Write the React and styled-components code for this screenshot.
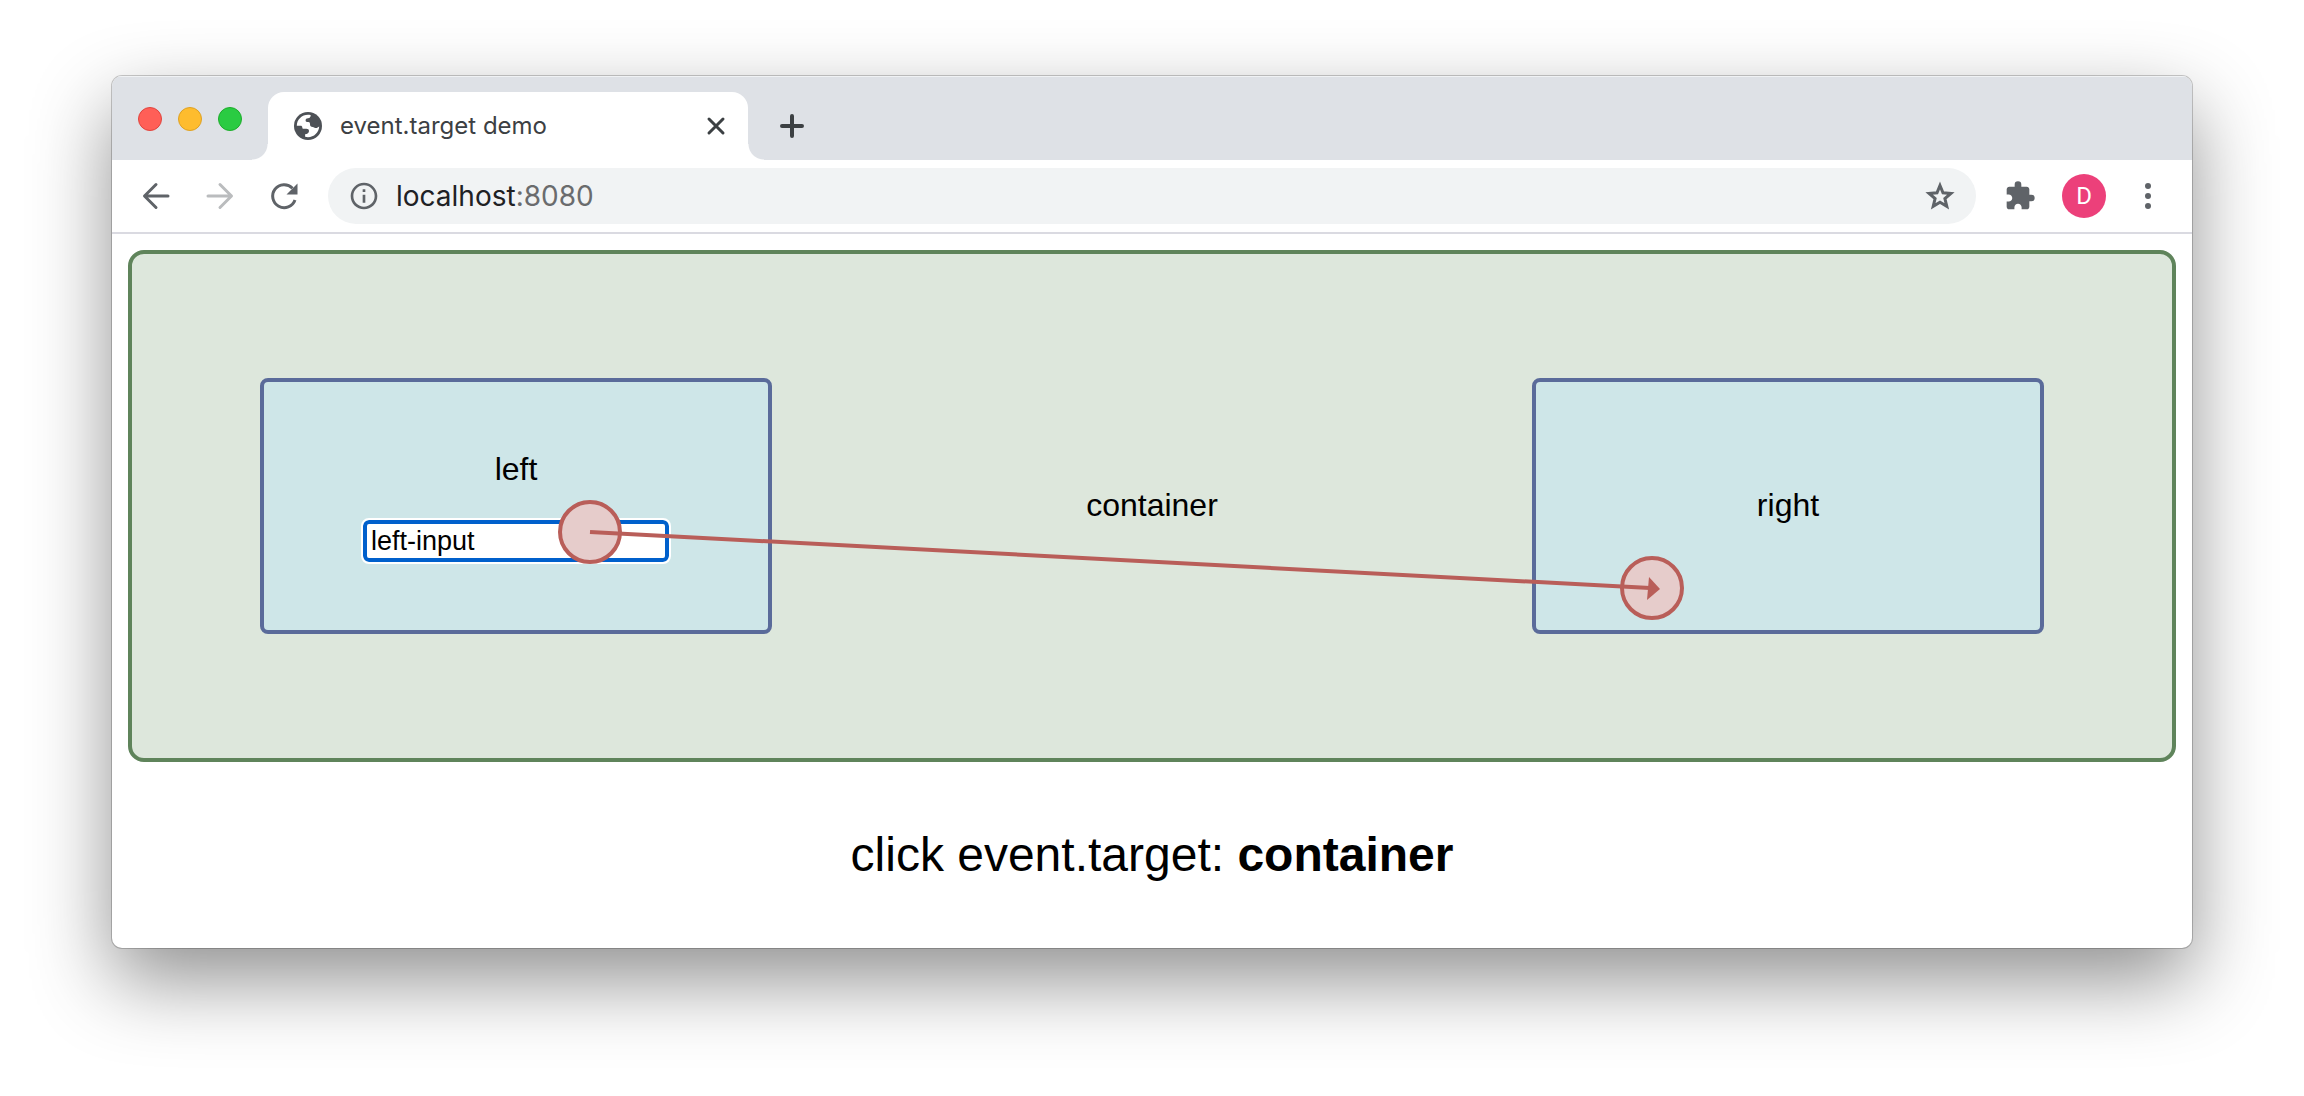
import React from 'react';
import styled, { createGlobalStyle } from 'styled-components';
import { MdExtension, MdOutlineInfo } from 'react-icons/md';

const GlobalStyle = createGlobalStyle`
  *, *::before, *::after { box-sizing: border-box; }
  body {
    margin: 0;
    background: #fff;
    color: #000;
    font-family: "Liberation Sans", Arial, sans-serif;
  }
  button, input { font: inherit; }
`;

const Desktop = styled.main`
  padding: 76px 112px 148px;
`;

const BrowserWindow = styled.section`
  border-radius: 10px;
  overflow: hidden;
  background: #fff;
  box-shadow:
    0 0 0 1px rgba(0, 0, 0, 0.2),
    0 32px 80px rgba(0, 0, 0, 0.44);
`;

const TabStrip = styled.header`
  display: flex;
  align-items: flex-end;
  height: 84px;
  background: #dee1e6;
  box-shadow: inset 0 2px 0 -1px #f0f2f4;
`;

const TrafficLights = styled.div`
  display: flex;
  align-self: center;
  gap: 16px;
  padding: 2px 26px 0;
`;

const Light = styled.button`
  width: 24px;
  height: 24px;
  padding: 0;
  border: 1px solid ${(p) => p.$edge};
  border-radius: 50%;
  background: ${(p) => p.$fill};
`;

const Tab = styled.div`
  position: relative;
  display: flex;
  align-items: center;
  gap: 18px;
  width: 480px;
  height: 68px;
  padding: 0 20px 0 26px;
  border-radius: 16px 16px 0 0;
  background: #fff;
  color: #3c4043;
  font: 24px/32px Inter, Roboto, sans-serif;

  &::before,
  &::after {
    content: "";
    position: absolute;
    bottom: 0;
    width: 16px;
    height: 16px;
  }
  &::before {
    right: 100%;
    background: radial-gradient(circle at 0 0, transparent 15px, #fff 16px);
  }
  &::after {
    left: 100%;
    background: radial-gradient(circle at 100% 0, transparent 15px, #fff 16px);
  }
`;

const TabTitle = styled.span`
  flex: 1;
  white-space: nowrap;
`;

const IconButton = styled.button`
  display: grid;
  place-items: center;
  flex: none;
  width: ${(p) => p.$size}px;
  height: ${(p) => p.$size}px;
  padding: 0;
  border: 0;
  background: none;
  color: ${(p) => p.$color || '#5f6368'};
  svg { display: block; }
`;

const NewTab = styled(IconButton)`
  align-self: flex-end;
  margin: 0 0 10px 20px;
`;

const Toolbar = styled.nav`
  display: flex;
  align-items: center;
  height: 74px;
  padding: 0 22px 0 20px;
  border-bottom: 2px solid #dadae1;
`;

const NavButtons = styled.div`
  display: flex;
  gap: 16px;
  margin-right: 20px;
`;

const Omnibox = styled.div`
  display: flex;
  flex: 1;
  align-items: center;
  gap: 16px;
  height: 56px;
  padding: 0 20px;
  border-radius: 28px;
  background: #f1f3f4;
  color: #5f6368;
`;

const Address = styled.span`
  flex: 1;
  color: #6a6b6d;
  font: 28px/36px Inter, Roboto, sans-serif;
  b { color: #202124; font-weight: 400; }
`;

const Actions = styled.div`
  display: flex;
  align-items: center;
  gap: 20px;
  margin-left: 22px;
`;

const Avatar = styled.button`
  width: 44px;
  height: 44px;
  padding: 0;
  border: 0;
  border-radius: 50%;
  background: #ec407a;
  color: #fff;
  font: 24px/44px Roboto, sans-serif;
`;

const Page = styled.div`
  padding: 16px 16px 0;
`;

const Container = styled.div`
  position: relative;
  display: flex;
  align-items: center;
  justify-content: space-between;
  min-height: 512px;
  padding: 0 128px;
  border: 4px solid #5f845b;
  border-radius: 16px;
  background: #dde7dc;
`;

const Label = styled.span`
  padding-bottom: 2px;
  font-size: 32px;
  line-height: 38px;
`;

const Box = styled.div`
  display: flex;
  flex-direction: column;
  align-items: center;
  justify-content: center;
  gap: 30px;
  width: 512px;
  height: 256px;
  border: 4px solid #5a6b9a;
  border-radius: 8px;
  background: #cee6e8;
`;

const Field = styled.input`
  width: 306px;
  height: 42px;
  padding: 0 4px;
  border: 4px solid #0060cc;
  border-radius: 6px;
  outline: 2px solid #fff;
  background: #fff;
  color: #000;
  font-size: 27px;
`;

const DragPath = styled.svg`
  position: absolute;
  inset: 0;
  width: 100%;
  height: 100%;
  pointer-events: none;
`;

const Result = styled.output`
  display: block;
  padding: 64px 0;
  font-size: 48px;
  line-height: 58px;
  text-align: center;
`;

const Stroke = ({ d, width = 3, size = 32 }) => (
  <svg width={size} height={size} viewBox={`0 0 ${size} ${size}`} fill="none" stroke="currentColor"
    strokeWidth={width} strokeLinecap="round" strokeLinejoin="round" aria-hidden="true">
    <path d={d} />
  </svg>
);

const Globe = () => (
  <svg width="28" height="28" viewBox="0 0 28 28" aria-hidden="true">
    <circle cx="14" cy="14" r="14" fill="#4d5156" />
    <path fill="#fff" d="M2.800 13.800C2.800 7.500 8 2.800 14 2.800c1 0 1.900.1 2.800.4-.3 1.900-1.100 2.900-2.800 3-1.500.1-2.400.8-2.400 2.200 0 1.300.9 1.700 2.700 1.700 1.400 0 1.700.9 1.700 2.200 0 2 .9 2.700 2.700 2.700 1.300 0 1.700 1.100 3.200 1.100 1.300 0 2.200-.9 3.300-1.600C24.800 20.500 20 25.200 14 25.200c-1 0-2-.1-2.900-.4v-2.500c2.300 0 3.900-1.300 3.900-3.200 0-1.500-1-2.300-2.600-2.300H9.600c-.9 0-1.300-.6-1.300-1.400 0-1-.7-1.600-1.700-1.600z" />
  </svg>
);

const Reload = () => (
  <svg width="32" height="32" viewBox="0 0 32 32" fill="none" aria-hidden="true">
    <path d="M27 20A11.500 11.500 0 1 1 24.500 8.200" stroke="currentColor" strokeWidth="3" />
    <path d="M29.500 3.500v11H18.500z" fill="currentColor" />
  </svg>
);

const Star = () => (
  <svg width="32" height="32" viewBox="0 0 32 32" fill="none" stroke="currentColor" strokeWidth="3" aria-hidden="true">
    <path d="M16 5.500l3 7.300 7.900.6-6 5.200 1.900 7.700L16 22.200l-6.800 4.100 1.900-7.700-6-5.200 7.900-.6z" />
  </svg>
);

const Menu = () => (
  <svg width="32" height="32" viewBox="0 0 32 32" fill="currentColor" aria-hidden="true">
    <circle cx="16" cy="6" r="3" /><circle cx="16" cy="16" r="3" /><circle cx="16" cy="26" r="3" />
  </svg>
);

export default function App() {
  return (
    <>
      <GlobalStyle />
      <Desktop>
        <BrowserWindow>
          <TabStrip>
            <TrafficLights>
              <Light aria-label="Close window" $fill="#ff5f57" $edge="#e0443e" />
              <Light aria-label="Minimize window" $fill="#febc2e" $edge="#dea123" />
              <Light aria-label="Zoom window" $fill="#2acb42" $edge="#1dad2b" />
            </TrafficLights>
            <Tab>
              <Globe />
              <TabTitle>event.target demo</TabTitle>
              <IconButton $size={24} $color="#3c4043" aria-label="Close tab">
                <Stroke size={24} d="M5 5l14 14M19 5L5 19" />
              </IconButton>
            </Tab>
            <NewTab $size={48} $color="#3c4043" aria-label="New tab">
              <Stroke width={4} d="M16 6v20M6 16h20" />
            </NewTab>
          </TabStrip>
          <Toolbar>
            <NavButtons>
              <IconButton $size={48} aria-label="Back">
                <Stroke d="M28 16H5M16 4.500L4.500 16L16 27.500" />
              </IconButton>
              <IconButton $size={48} $color="#babcbe" aria-label="Forward">
                <Stroke d="M4 16h23M16 4.500L27.500 16L16 27.500" />
              </IconButton>
              <IconButton $size={48} aria-label="Reload"><Reload /></IconButton>
            </NavButtons>
            <Omnibox>
              <MdOutlineInfo size={32} />
              <Address><b>localhost</b>:8080</Address>
              <IconButton $size={32} aria-label="Bookmark this page"><Star /></IconButton>
            </Omnibox>
            <Actions>
              <IconButton $size={44} aria-label="Extensions"><MdExtension size={32} /></IconButton>
              <Avatar aria-label="Profile D">D</Avatar>
              <IconButton $size={44} aria-label="Menu"><Menu /></IconButton>
            </Actions>
          </Toolbar>
          <Page>
            <Container>
              <Box>
                <Label as="label" htmlFor="left-input">left</Label>
                <Field id="left-input" defaultValue="left-input" />
              </Box>
              <Label>container</Label>
              <Box>
                <Label>right</Label>
              </Box>
              <DragPath viewBox="0 0 2040 504" aria-hidden="true">
                <g fill="#e6cccb" stroke="#b95e59" strokeWidth="4">
                  <circle cx="458" cy="278" r="30" />
                  <circle cx="1520" cy="334" r="30" />
                  <path d="M458 278L1518 334" />
                </g>
                <path d="M1517 323L1528 335L1515 346z" fill="#b95e59" />
              </DragPath>
            </Container>
            <Result>
              click event.target: <strong>container</strong>
            </Result>
          </Page>
        </BrowserWindow>
      </Desktop>
    </>
  );
}
